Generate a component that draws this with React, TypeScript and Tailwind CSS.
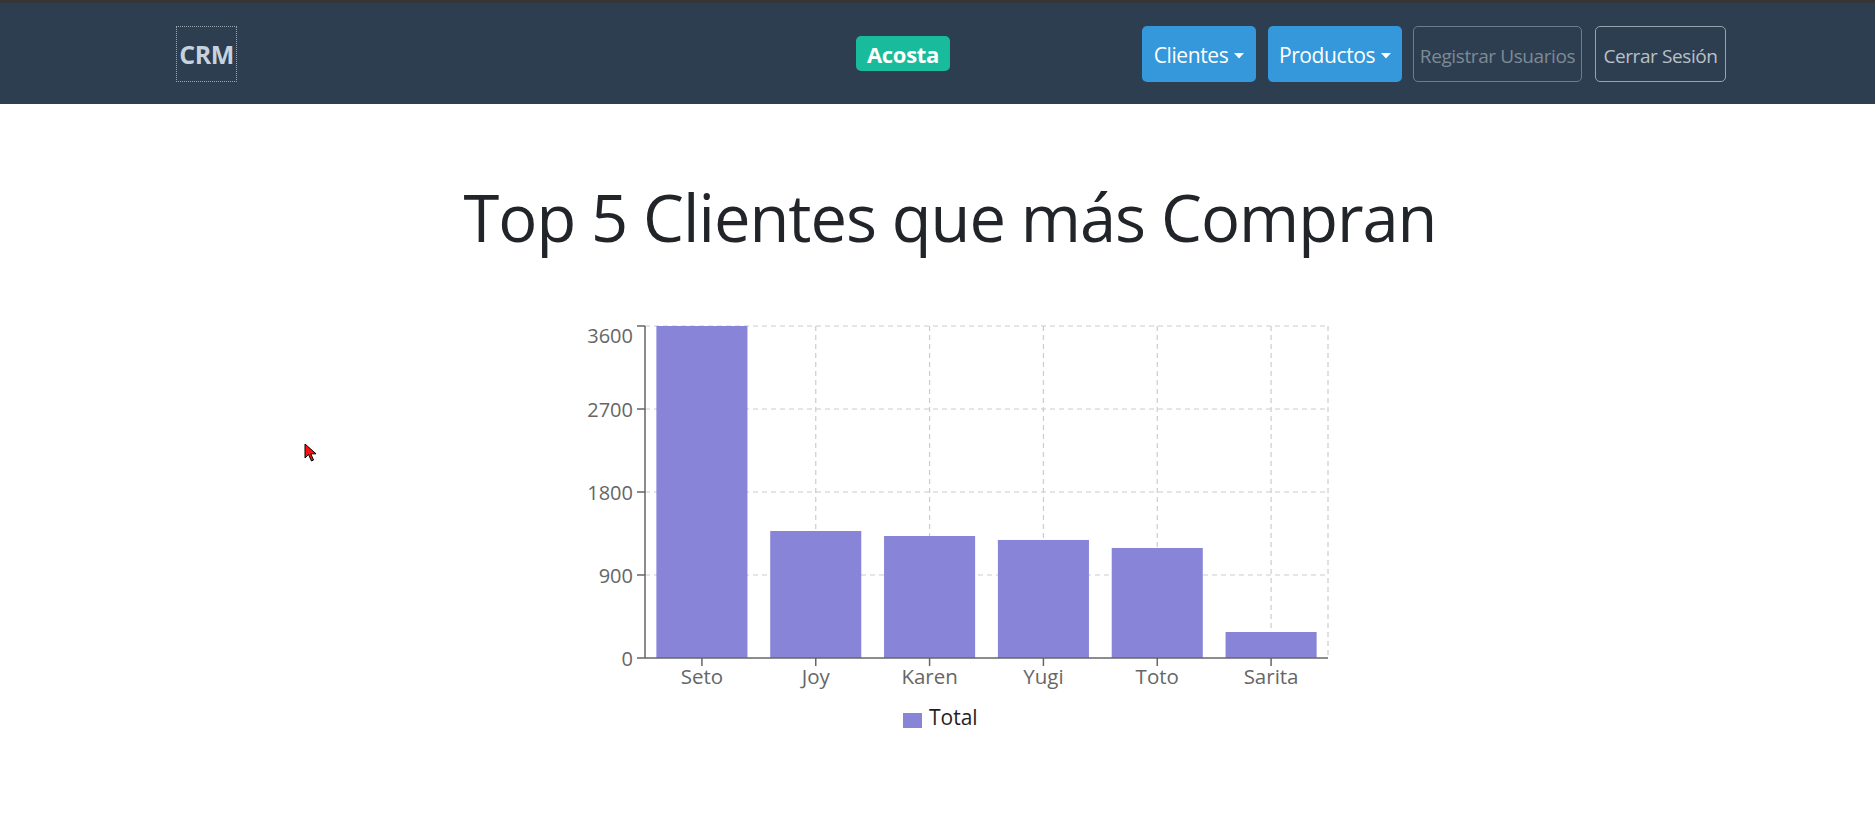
import React from "react";

const data = [
  { name: "Seto", value: 3600 },
  { name: "Joy", value: 1377 },
  { name: "Karen", value: 1323 },
  { name: "Yugi", value: 1280 },
  { name: "Toto", value: 1193 },
  { name: "Sarita", value: 282 },
];

function Caret() {
  return (
    <svg width="10" height="6" viewBox="0 0 10 6" className="ml-[6px]">
      <path d="M0 0 L10 0 L5 5.5 Z" fill="white" />
    </svg>
  );
}

function Chart() {
  const left = 108;
  const right = 791;
  const top = 25;
  const bottom = 357;
  const cw = (right - left) / data.length;
  const h = bottom - top;
  const yFor = (v: number) => bottom - (v / 3600) * h;
  const ticks = [0, 900, 1800, 2700, 3600];
  return (
    <svg width="801" height="440" className="font-['Open_Sans',sans-serif]">
      {ticks.slice(1).map((t) => (
        <line key={t} x1={left} x2={right} y1={yFor(t)} y2={yFor(t)} stroke="#ccc" strokeDasharray="5 4" strokeWidth="1.2" />
      ))}
      {data.map((d, i) => (
        <line key={d.name} x1={left + cw * i + cw / 2} x2={left + cw * i + cw / 2} y1={top} y2={bottom} stroke="#ccc" strokeDasharray="5 4" strokeWidth="1.2" />
      ))}
      <line x1={right} x2={right} y1={top} y2={bottom} stroke="#ccc" strokeDasharray="5 4" strokeWidth="1.2" />
      {data.map((d, i) => (
        <rect key={d.name} x={left + cw * i + cw * 0.1} y={yFor(d.value)} width={cw * 0.8} height={bottom - yFor(d.value)} fill="#8884d8" />
      ))}
      <line x1={left} x2={left} y1={top} y2={bottom} stroke="#666" strokeWidth="1.5" />
      <line x1={left} x2={right} y1={bottom} y2={bottom} stroke="#666" strokeWidth="1.5" />
      {ticks.map((t) => (
        <g key={t}>
          <line x1={left - 8} x2={left} y1={yFor(t)} y2={yFor(t)} stroke="#666" strokeWidth="1.5" />
          <text x={96} y={t === 3600 ? 42 : yFor(t) + 7.5} textAnchor="end" fontSize="20" fill="#666">
            {t}
          </text>
        </g>
      ))}
      {data.map((d, i) => (
        <g key={d.name}>
          <line x1={left + cw * i + cw / 2} x2={left + cw * i + cw / 2} y1={bottom} y2={bottom + 8} stroke="#666" strokeWidth="1.5" />
          <text x={left + cw * i + cw / 2} y={383} textAnchor="middle" fontSize="20.5" fill="#666">
            {d.name}
          </text>
        </g>
      ))}
      <rect x={366} y={412} width={19} height={15} fill="#8884d8" />
      <text x={392} y={424} fontSize="21" fill="#1f1f1f">
        Total
      </text>
    </svg>
  );
}

export default function App() {
  return (
    <div className="w-[1875px] h-[818px] bg-white relative overflow-hidden font-['Open_Sans',sans-serif]">
      <div className="h-[3px] bg-[#363636]" />
      <nav className="h-[101px] bg-[#2d3e50] flex items-center">
        <div className="ml-[176px] w-[61px] h-[56px] pt-[3px] border border-dotted border-[#9aa5b1] flex items-center justify-center text-[25px] font-bold text-[#c5d3de] tracking-[-0.5px]">
          CRM
        </div>
        <div className="ml-[619px] w-[94px] h-[35px] pt-[2px] rounded-[5px] bg-[#18bc9c] flex items-center justify-center text-white font-bold text-[22px] tracking-[-0.3px]">
          Acosta
        </div>
        <div className="flex-1" />
        <div className="mr-[149px] flex items-center">
          <button className="w-[114px] h-[56px] pt-[5px] rounded-[5px] bg-[#3498db] text-white text-[21px] flex items-center justify-center tracking-[-0.4px]">
            Clientes
            <Caret />
          </button>
          <button className="ml-[12px] w-[134px] h-[56px] pt-[5px] rounded-[5px] bg-[#3498db] text-white text-[21px] flex items-center justify-center tracking-[-0.4px]">
            Productos
            <Caret />
          </button>
          <button className="ml-[11px] w-[169px] h-[56px] pt-[5px] rounded-[5px] border border-[#6f7d8a] text-[#7d8a96] text-[19px] flex items-center justify-center tracking-[-0.4px]">
            Registrar Usuarios
          </button>
          <button className="ml-[13px] w-[131px] h-[56px] pt-[5px] rounded-[5px] border border-[#98a3ad] text-[#b9c1c8] text-[19px] flex items-center justify-center tracking-[-0.4px]">
            Cerrar Sesión
          </button>
        </div>
      </nav>
      <div className="mt-[74px] flex justify-center pl-[25px]">
        <h1 className="text-[65px] leading-[1.2] text-[#212529] tracking-[-1px]">Top 5 Clientes que más Compran</h1>
      </div>
      <div className="mt-[45px] flex justify-center">
        <Chart />
      </div>
      <svg className="absolute left-[304px] top-[443px]" width="16" height="20" viewBox="0 0 16 20">
        <path d="M1 1 L1 15 L4.5 11.5 L7.5 18 L9.5 17 L6.8 10.8 L12 10.8 Z" fill="#ff1010" stroke="#000" strokeWidth="1" />
      </svg>
    </div>
  );
}
